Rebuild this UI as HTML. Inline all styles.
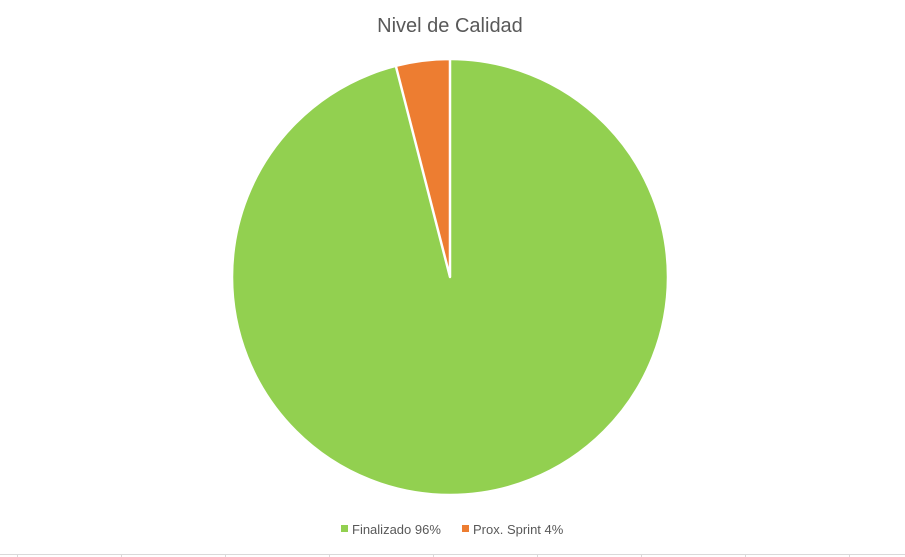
<!DOCTYPE html>
<html><head><meta charset="utf-8"><style>
html,body{margin:0;padding:0;background:#fff;width:905px;height:557px;overflow:hidden;font-family:"Liberation Sans",sans-serif;}
</style></head><body>
<svg width="905" height="557" viewBox="0 0 905 557" xmlns="http://www.w3.org/2000/svg">
<rect width="905" height="557" fill="#fff"/>
<text x="450" y="32" text-anchor="middle" font-family="Liberation Sans, sans-serif" font-size="20" fill="#595959">Nivel de Calidad</text>
<circle cx="450" cy="277" r="218" fill="#92d050" stroke="#fff" stroke-width="2.5"/>
<path d="M450 277 L450 59 A218 218 0 0 0 395.8 65.8 Z" fill="#ed7d31" stroke="#fff" stroke-width="2.5" stroke-linejoin="round"/>
<rect x="341" y="525" width="7" height="7" fill="#92d050"/>
<text x="352" y="534" font-family="Liberation Sans, sans-serif" font-size="13" fill="#595959">Finalizado 96%</text>
<rect x="462" y="525" width="7" height="7" fill="#ed7d31"/>
<text x="473" y="534" font-family="Liberation Sans, sans-serif" font-size="13" fill="#595959">Prox. Sprint 4%</text>
<line x1="0" y1="554.5" x2="905" y2="554.5" stroke="#d9d9d9" stroke-width="1"/>
<g stroke="#d9d9d9" stroke-width="1">
<line x1="17.5" y1="554" x2="17.5" y2="557"/><line x1="121.5" y1="554" x2="121.5" y2="557"/>
<line x1="225.5" y1="554" x2="225.5" y2="557"/><line x1="329.5" y1="554" x2="329.5" y2="557"/>
<line x1="433.5" y1="554" x2="433.5" y2="557"/><line x1="537.5" y1="554" x2="537.5" y2="557"/>
<line x1="641.5" y1="554" x2="641.5" y2="557"/><line x1="745.5" y1="554" x2="745.5" y2="557"/>
<line x1="849.5" y1="554" x2="849.5" y2="557"/>
</g>
</svg>
</body></html>
